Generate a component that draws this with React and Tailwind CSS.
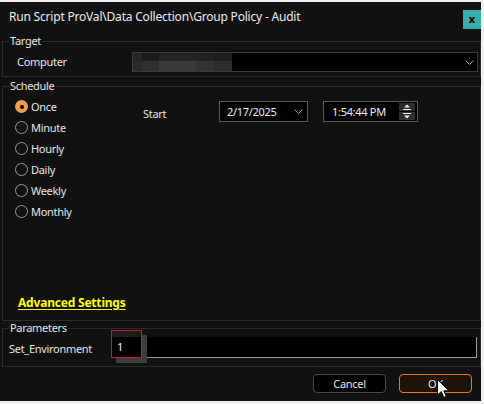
import React from "react";

function Radio({ label, checked }) {
  return (
    <div className="h-[21px] flex items-center pl-[12px] gap-[3px]">
      {checked ? (
        <div className="w-[13px] h-[13px] rounded-full bg-[#f59c48] flex items-center justify-center">
          <div className="w-[4px] h-[4px] rounded-full bg-black" />
        </div>
      ) : (
        <div className="w-[13px] h-[13px] rounded-full border border-[#9a9a9a]" />
      )}
      <span className="text-[11px] tracking-[-0.3px] leading-[16px] text-[#e6e6e6]">{label}</span>
    </div>
  );
}

function Chevron({ className }) {
  return (
    <svg className={className} width="9" height="5" viewBox="0 0 9 5" fill="none">
      <path d="M0.5 0.5 L4.5 4.5 L8.5 0.5" stroke="#9a9a9a" strokeWidth="1" />
    </svg>
  );
}

const blur = [
  ["w-[9px]", "bg-[#262626]", "bg-[#2a2a2a]"],
  ["w-[17px]", "bg-[#1c1c1c]", "bg-[#303030]"],
  ["w-[37px]", "bg-[#242424]", "bg-[#3a3a3a]"],
  ["w-[18px]", "bg-[#212121]", "bg-[#333333]"],
  ["w-[18px]", "bg-[#1e1e1e]", "bg-[#2e2e2e]"],
];

const lbl = "text-[11px] tracking-[-0.3px] leading-[16px]";

export default function App() {
  return (
    <div className="w-[484px] h-[404px] bg-[#f0f0f0] pt-[2px] font-['Noto_Sans',sans-serif] overflow-hidden">
      <div className="relative w-[481px] h-[399px] bg-[#111111] flex flex-col text-[#e6e6e6]">
        {/* Title bar */}
        <div className="h-[28px] flex items-start">
          <div className="pl-[9px] pt-[6px] text-[12px] tracking-[-0.2px] leading-[18px] text-[#ececec]">
            Run Script ProVal\Data Collection\Group Policy - Audit
          </div>
          <div className="ml-auto mt-[8px] w-[18px] h-[19px] bg-[#38adab] flex items-center justify-center text-black text-[11px] font-bold leading-none pb-[2px]">
            x
          </div>
        </div>

        {/* Target */}
        <fieldset className="mt-[3px] ml-[2px] w-[479px] border border-[#2c2c2c] pb-[4px]">
          <legend className={`ml-[6px] px-[1px] ${lbl}`}>Target</legend>
          <div className="flex items-center pt-[3px]">
            <div className={`w-[129px] pl-[14px] ${lbl}`}>Computer</div>
            <div className="w-[346px] h-[20px] bg-black border border-[#3a3a3a] flex items-center">
              <div className="flex flex-col h-[18px]">
                <div className="flex h-[8px]">
                  {blur.map((b, i) => (
                    <div key={i} className={`${b[0]} ${b[1]}`} />
                  ))}
                </div>
                <div className="flex h-[10px]">
                  {blur.map((b, i) => (
                    <div key={i} className={`${b[0]} ${b[2]}`} />
                  ))}
                </div>
              </div>
              <Chevron className="ml-auto mr-[3px]" />
            </div>
          </div>
        </fieldset>

        {/* Schedule */}
        <fieldset className="mt-[1px] ml-[2px] w-[479px] border border-[#2c2c2c]">
          <legend className={`ml-[6px] px-[1px] ${lbl}`}>Schedule</legend>
          <div className="h-[226px] flex flex-col">
            <div className="flex">
              <div className="w-[140px] pt-[2px] flex flex-col">
                <Radio label="Once" checked />
                <Radio label="Minute" />
                <Radio label="Hourly" />
                <Radio label="Daily" />
                <Radio label="Weekly" />
                <Radio label="Monthly" />
              </div>
              <div className="flex items-start">
                <div className={`w-[76px] mt-[12px] ${lbl}`}>Start</div>
                <div className="mt-[7px] w-[89px] h-[21px] border border-[#5a5a5a] bg-black flex items-center pl-[7px]">
                  <span className={`${lbl} text-[#e8f0fb]`}>2/17/2025</span>
                  <Chevron className="ml-auto mr-[4px]" />
                </div>
                <div className="ml-[15px] mt-[7px] w-[95px] h-[21px] border border-[#5a5a5a] bg-black flex items-center pl-[8px]">
                  <span className={`${lbl} text-[#e8f0fb]`}>1:54:44 PM</span>
                  <div className="ml-auto mr-[2px] flex flex-col gap-[1px]">
                    <svg width="16" height="8" viewBox="0 0 16 8">
                      <rect x="0" y="0" width="16" height="8" fill="#2e2e2e" />
                      <path d="M5 4.5 L8 1.5 L11 4.5 Z" fill="#f0f0f0" />
                      <rect x="4" y="6" width="8" height="1" fill="#f0f0f0" />
                    </svg>
                    <svg width="16" height="8" viewBox="0 0 16 8">
                      <rect x="0" y="0" width="16" height="8" fill="#2e2e2e" />
                      <rect x="4" y="1" width="8" height="1" fill="#f0f0f0" />
                      <path d="M5 3.5 L8 6.5 L11 3.5 Z" fill="#f0f0f0" />
                    </svg>
                  </div>
                </div>
              </div>
            </div>
            <div className="mt-auto pb-[7px] pl-[15px]">
              <span className="text-[12px] tracking-[-0.2px] leading-[16px] font-bold text-[#ffff00] underline underline-offset-[2px]">
                Advanced Settings
              </span>
            </div>
          </div>
        </fieldset>

        {/* Parameters */}
        <fieldset className="ml-[2px] w-[479px] border border-[#2c2c2c] pb-[8px]">
          <legend className="ml-[6px] px-[1px] text-[11px] tracking-[-0.3px] leading-[14px]">Parameters</legend>
          <div className="-mt-[5px] flex items-end">
            <div className={`w-[102px] ml-[6px] mb-[1px] ${lbl}`}>Set_Environment</div>
            <div className="relative z-10 w-[31px] h-[28px] border border-[#d01818] bg-black shadow-[inset_0_6px_0_#1c1c1c,5px_5px_0_#3e3e3e] flex items-end pl-[5px] pb-[2px]">
              <span className={`${lbl} text-[#eef3ff]`}>1</span>
            </div>
            <div className="flex-1 mr-[3px] h-[21px] bg-black border-b border-r border-[#9a9a9a]" />
          </div>
        </fieldset>

        {/* Buttons */}
        <div className="flex justify-end gap-[13px] pt-[7px] pr-[9px]">
          <div className={`w-[73px] h-[19px] rounded-[4px] border border-[#4a4a4a] bg-black flex items-center justify-center ${lbl}`}>
            Cancel
          </div>
          <div className={`w-[73px] h-[19px] rounded-[4px] border border-[#e07a2a] bg-[#1f1206] flex items-center justify-center ${lbl}`}>
            OK
          </div>
        </div>

        {/* Mouse cursor */}
        <svg className="absolute left-[437px] top-[377px]" width="13" height="20" viewBox="0 0 13 20">
          <path d="M0.5 0.5 L0.5 16 L4.3 12.6 L6.8 18.5 L9.3 17.4 L6.9 11.8 L12 11.8 Z" fill="#ffffff" stroke="#000000" strokeWidth="1" />
        </svg>
      </div>
    </div>
  );
}
